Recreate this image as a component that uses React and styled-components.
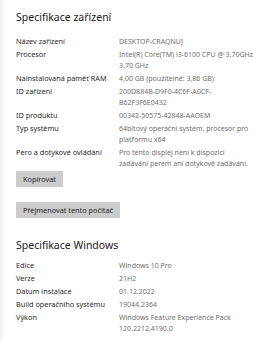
import React from 'react';
import styled, { createGlobalStyle } from 'styled-components';

const GlobalStyle = createGlobalStyle`
  html, body {
    margin: 0;
    padding: 0;
    background: #ffffff;
  }
  body {
    font-family: "Noto Sans", "Open Sans", sans-serif;
    -webkit-font-smoothing: antialiased;
  }
`;

const device = [
  { label: 'Název zařízení', value: ['DESKTOP-CRAQNUJ'] },
  { label: 'Procesor', value: ['Intel(R) Core(TM) i3-6100 CPU @ 3.70GHz', '3.70 GHz'] },
  { label: 'Nainstalovaná paměť RAM', value: ['4,00 GB (použitelné: 3,86 GB)'] },
  { label: 'ID zařízení', value: ['200D884B-D9F0-4C6F-A0CF-', 'B62F3F6E0432'] },
  { label: 'ID produktu', value: ['00342-50575-42848-AAOEM'] },
  { label: 'Typ systému', value: ['64bitový operační systém, procesor pro', 'platformu x64'] },
  {
    label: 'Pero a dotykové ovládání',
    value: ['Pro tento displej není k dispozici', 'zadávání perem ani dotykové zadávání.'],
  },
];

const windows = [
  { label: 'Edice', value: ['Windows 10 Pro'] },
  { label: 'Verze', value: ['21H2'] },
  { label: 'Datum instalace', value: ['01.12.2022'] },
  { label: 'Build operačního systému', value: ['19044.2364'] },
  { label: 'Výkon', value: ['Windows Feature Experience Pack', '120.2212.4190.0'] },
];

function SpecTable({ rows, top }) {
  return (
    <SpecList $top={top}>
      {rows.map((row) => (
        <SpecRow key={row.label}>
          <Label>{row.label}</Label>
          <Value>
            {row.value.map((line) => (
              <div key={line}>{line}</div>
            ))}
          </Value>
        </SpecRow>
      ))}
    </SpecList>
  );
}

export default function App() {
  return (
    <>
      <GlobalStyle />
      <Page>
        <Title>Specifikace zařízení</Title>
        <SpecTable rows={device} top={10} />
        <Button $top={2}>Kopírovat</Button>
        <Button $top={15}>Přejmenovat tento počítač</Button>
        <Title $top={18}>Specifikace Windows</Title>
        <SpecTable rows={windows} top={6} />
      </Page>
    </>
  );
}

const Page = styled.div`
  display: flex;
  flex-direction: column;
  align-items: flex-start;
  width: 263px;
  height: 340px;
  box-sizing: border-box;
  padding: 8px 0 0 13px;
  border-left: 3px solid #f3f3f3;
  overflow: hidden;
  background: #ffffff;
`;

const Title = styled.h2`
  margin: ${(p) => p.$top || 0}px 0 0 0;
  font-size: 10.5px;
  font-weight: 400;
  line-height: 18px;
  color: #1a1a1a;
`;

const SpecList = styled.div`
  display: flex;
  flex-direction: column;
  gap: 2px;
  margin-top: ${(p) => p.$top}px;
`;

const SpecRow = styled.div`
  display: grid;
  grid-template-columns: 103px 1fr;
  line-height: 11px;
`;

const Label = styled.div`
  font-size: 7.3px;
  color: #2b2b2b;
`;

const Value = styled.div`
  font-size: 7px;
  color: #707070;
`;

const Button = styled.button`
  margin: ${(p) => p.$top}px 0 0 0;
  padding: 0 7px;
  height: 16px;
  border: none;
  background: #cccccc;
  color: #1f1f1f;
  font-family: "Noto Sans", "Open Sans", sans-serif;
  font-size: 7.3px;
  line-height: 16px;
`;
